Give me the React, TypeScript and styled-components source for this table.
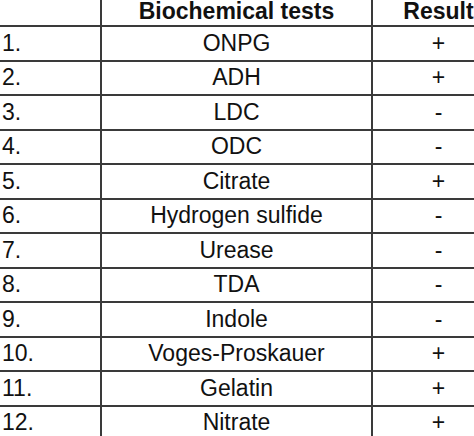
import React from "react";
import styled, { createGlobalStyle } from "styled-components";

const Global = createGlobalStyle`
  html, body { margin: 0; padding: 0; background: #fff; }
  body { overflow: hidden; }
  #root { width: 474px; height: 436px; overflow: hidden; }
`;

const Table = styled.div`
  width: 504px;
  font-family: "Liberation Sans", Arial, sans-serif;
  color: #111;
`;

const Row = styled.div<{ $header?: boolean }>`
  display: grid;
  grid-template-columns: 100px 271px 133px;
  box-sizing: border-box;
  height: ${(p) => (p.$header ? "25px" : "34.5px")};
  border-top: ${(p) => (p.$header ? "none" : "2px solid #3a3a3a")};
`;

const Cell = styled.div<{ $align?: "left" | "center"; $bold?: boolean; $divider?: boolean; $header?: boolean }>`
  display: flex;
  align-items: ${(p) => (p.$header ? "flex-end" : "center")};
  justify-content: ${(p) => (p.$align === "left" ? "flex-start" : "center")};
  padding-left: ${(p) => (p.$align === "left" ? "2px" : "0")};
  padding-bottom: ${(p) => (p.$header ? "3px" : "0")};
  border-left: ${(p) => (p.$divider ? "2px solid #3a3a3a" : "none")};
  font-size: 23px;
  font-weight: ${(p) => (p.$bold ? 700 : 400)};
  white-space: nowrap;
  line-height: 1;
`;

const rows: [string, string][] = [
  ["ONPG", "+"],
  ["ADH", "+"],
  ["LDC", "-"],
  ["ODC", "-"],
  ["Citrate", "+"],
  ["Hydrogen sulfide", "-"],
  ["Urease", "-"],
  ["TDA", "-"],
  ["Indole", "-"],
  ["Voges-Proskauer", "+"],
  ["Gelatin", "+"],
  ["Nitrate", "+"],
];

export default function App() {
  return (
    <>
      <Global />
      <Table>
        <Row $header>
          <Cell $align="left" $header />
          <Cell $divider $bold $header>Biochemical tests</Cell>
          <Cell $divider $bold $header>Result</Cell>
        </Row>
        {rows.map(([test, result], i) => (
          <Row key={test}>
            <Cell $align="left">{i + 1}.</Cell>
            <Cell $divider>{test}</Cell>
            <Cell $divider>{result}</Cell>
          </Row>
        ))}
      </Table>
    </>
  );
}
